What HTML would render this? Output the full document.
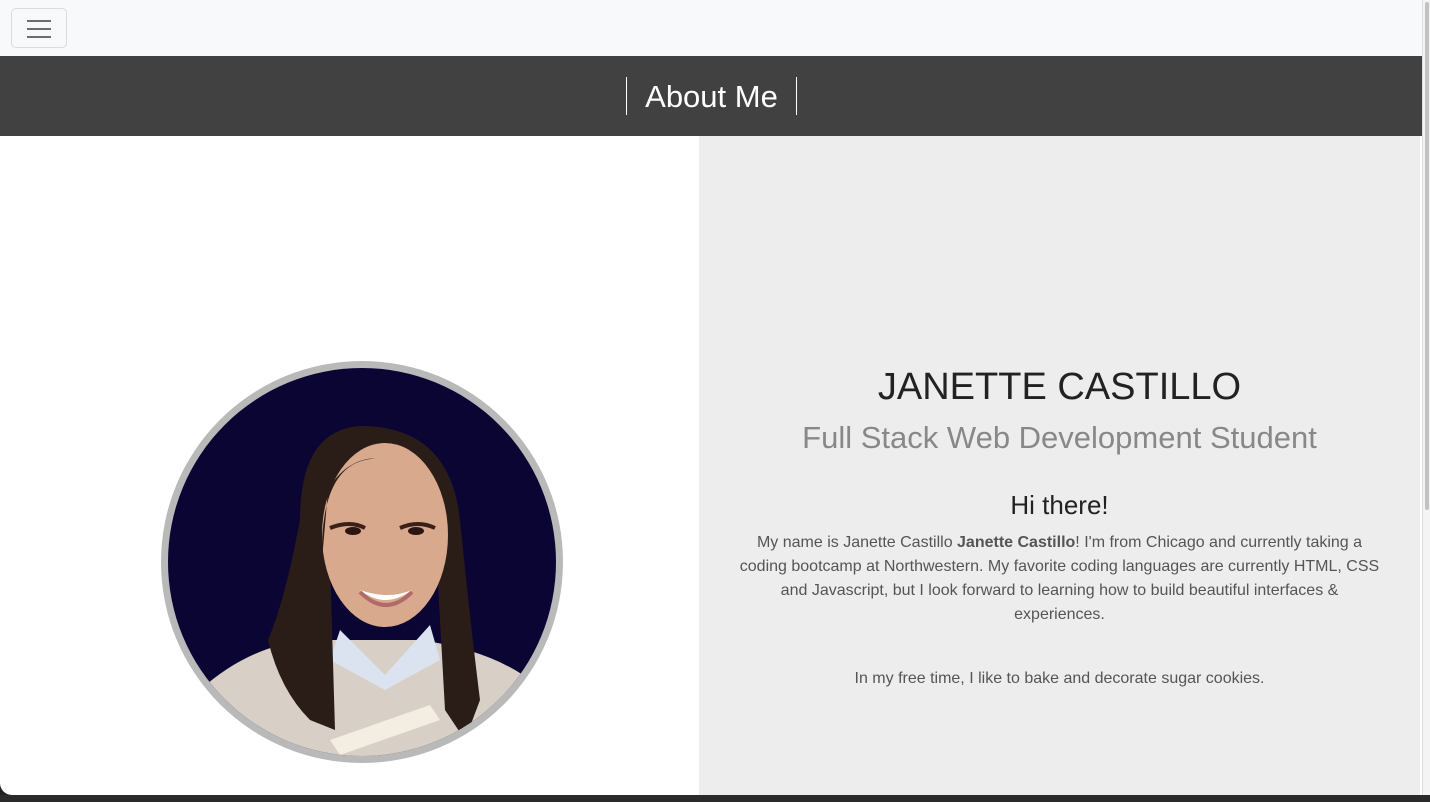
<!DOCTYPE html>
<html><head><meta charset="utf-8"><style>
*{margin:0;padding:0;box-sizing:border-box}
body{width:1430px;height:802px;overflow:hidden;background:#222;font-family:"Liberation Sans",Helvetica,Arial,sans-serif;position:relative}
.nav{position:absolute;left:0;top:0;width:1422px;height:56px;background:#f8f9fa}
.tog{position:absolute;left:11px;top:8px;width:56px;height:40px;border:1px solid #dcdcdc;border-radius:5px}
.tog i{position:absolute;left:15px;width:24px;height:2px;background:#6d6d6d}
.hdr{position:absolute;left:0;top:56px;width:1422px;height:80px;background:#414141}
.title{position:absolute;left:626px;top:21px;width:171px;height:38px;border-left:1.5px solid #fff;border-right:1.5px solid #fff;color:#fff;font-size:31px;text-align:center;line-height:40px}
.main{position:absolute;left:0;top:136px;width:1422px;height:659px;background:#fff;border-bottom-left-radius:12px;overflow:hidden}
.right{position:absolute;left:699px;top:0;width:721px;height:659px;background:#ededed;text-align:center;color:#555}
.sb{position:absolute;left:1422px;top:0;width:8px;height:802px;background:#f4f4f4;border-left:1px solid #ddd}
.sb i{position:absolute;left:2px;top:2px;width:4px;height:508px;background:#c2c2c2;border-radius:2px}
.bot{position:absolute;left:0;top:795px;width:1430px;height:7px;background:#2a2a2a}
h1{position:absolute;left:0;width:721px;top:230px;font-size:38px;font-weight:400;color:#222}
h2{position:absolute;left:0;width:721px;top:284px;font-size:31px;font-weight:400;color:#888}
h3{position:absolute;left:0;width:721px;top:354px;font-size:26px;font-weight:400;color:#222}
p{position:absolute;left:39px;width:643px;font-size:16px;line-height:24px;color:#555}
</style></head><body>
<div class="nav"><div class="tog"><i style="top:11px"></i><i style="top:19px"></i><i style="top:27px"></i></div></div>
<div class="hdr"><div class="title">About Me</div></div>
<div class="main">
<svg style="position:absolute;left:160px;top:224px" width="405" height="405" viewBox="0 0 405 405">
<defs><clipPath id="c"><circle cx="202" cy="202" r="194"/></clipPath></defs>
<circle cx="202" cy="202" r="201" fill="#b9b9b9"/>
<g clip-path="url(#c)">
<rect width="405" height="405" fill="#0b0533"/>
<path d="M40 330 Q90 285 150 280 L260 280 Q330 290 370 320 L380 405 L30 405Z" fill="#d8d0c6"/>
<path d="M180 270 L225 315 L270 265 L280 300 L225 330 L170 300Z" fill="#dbe3f0"/>
<path d="M200 66 Q140 70 140 160 Q125 240 108 280 Q120 330 150 360 L175 370 L170 200 Q165 120 205 100 Q265 110 275 170 L280 260 L285 350 L305 380 L320 340 Q310 260 300 160 Q290 66 200 66Z" fill="#2a1d18"/>
<ellipse cx="225" cy="175" rx="63" ry="92" fill="#d9a98e"/>
<path d="M205 100 Q160 110 162 200 L168 130 Q185 100 215 98Z" fill="#2a1d18"/>
<path d="M170 168 Q190 160 205 168 M240 168 Q258 160 275 168" stroke="#3a2018" stroke-width="4" fill="none"/>
<ellipse cx="193" cy="171" rx="8" ry="4" fill="#2a1510"/><ellipse cx="256" cy="171" rx="8" ry="4" fill="#2a1510"/>
<path d="M200 230 Q225 250 252 230 Q228 240 200 230Z" fill="#fff"/>
<path d="M200 232 Q226 258 252 232" stroke="#b06a6a" stroke-width="4" fill="none"/>
<path d="M170 380 L270 345 L280 360 L180 395Z" fill="#f4ede2"/>
</g>
</svg>
<div class="right">
<h1>JANETTE CASTILLO</h1>
<h2>Full Stack Web Development Student</h2>
<h3>Hi there!</h3>
<p style="top:395px">My name is Janette Castillo <b>Janette Castillo</b>! I'm from Chicago and currently taking a coding bootcamp at Northwestern. My favorite coding languages are currently HTML, CSS and Javascript, but I look forward to learning how to build beautiful interfaces &amp; experiences.</p>
<p style="top:531px">In my free time, I like to bake and decorate sugar cookies.</p>
</div>
</div>
<div class="sb"><i></i></div>
<div class="bot"></div>
</body></html>
